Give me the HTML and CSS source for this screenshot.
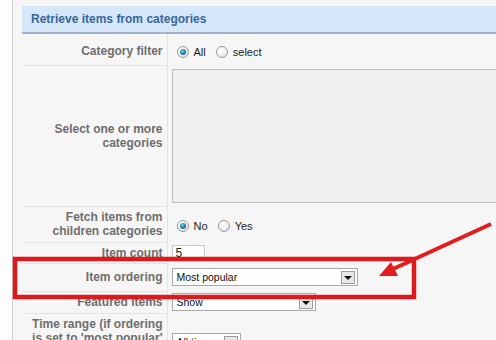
FILE: index.html
```html
<!DOCTYPE html>
<html lang="en">
  <head>
    <meta charset="UTF-8" />
    <title>Module parameters</title>
    <link rel="stylesheet" href="styles.css">
  </head>

  <body>
    <div class="page">
      <div class="gutter"></div>
      <div class="panel">
        <h3 class="panel-title">Retrieve items from categories</h3>

        <table class="paramlist">
          <tr class="row-filter">
            <td class="key">Category filter</td>
            <td class="value">
              <span class="radio checked"></span><span class="opt">All</span>
              <span class="radio"></span><span class="opt">select</span>
            </td>
          </tr>
          <tr class="row-cats">
            <td class="key">Select one or more categories</td>
            <td class="value"><div class="multi"></div></td>
          </tr>
          <tr class="row-children">
            <td class="key">Fetch items from children categories</td>
            <td class="value">
              <span class="radio checked"></span><span class="opt">No</span>
              <span class="radio"></span><span class="opt">Yes</span>
            </td>
          </tr>
          <tr class="row-count">
            <td class="key">Item count</td>
            <td class="value"><span class="textbox">5</span></td>
          </tr>
          <tr class="row-ordering">
            <td class="key">Item ordering</td>
            <td class="value">
              <span class="select wide">Most popular<span class="drop"></span></span>
            </td>
          </tr>
          <tr class="row-featured">
            <td class="key">Featured items</td>
            <td class="value">
              <span class="select mid">Show<span class="drop"></span></span>
            </td>
          </tr>
          <tr class="row-time">
            <td class="key">Time range (if ordering is set to 'most popular' or 'most commented')</td>
            <td class="value">
              <span class="select small">All time<span class="drop"></span></span>
            </td>
          </tr>
        </table>
      </div>
    </div>

    <!-- annotation drawn on top of the screenshot -->
    <svg class="marks" width="496" height="340" viewBox="0 0 496 340">
      <rect x="15" y="259" width="399" height="38" fill="none" stroke="#dc1a1d" stroke-width="4.5" />
      <line x1="491" y1="224" x2="393" y2="269" stroke="#e31d1f" stroke-width="4" />
      <polygon points="379,276 391,262 398,276" fill="#e31d1f" />
    </svg>
  </body>
</html>
```

FILE: styles.css
```css
* {
  margin: 0;
  box-sizing: border-box;
}

body {
  background-color: #ffffff;
  width: 496px;
  height: 340px;
  overflow: hidden;
  position: relative;
  font-family: "Liberation Sans", Arial, sans-serif;
}

.page {
  display: flex;
  height: 340px;
}

.gutter {
  width: 13px;
  flex: none;
  border-right: 1px solid #cfcfcf;
  background-color: #fdfdfd;
}

.panel {
  flex: none;
  width: 540px;
  padding: 6px 0 0 9px;
  background-color: #f6f6f6;
}

.panel-title {
  height: 28px;
  padding: 0 9px;
  font-size: 12px;
  line-height: 26px;
  color: #36679c;
  background-color: #d6e7f9;
  border-bottom: 2px solid #9fb3cb;
}

.paramlist {
  width: 100%;
  border-collapse: collapse;
}

.paramlist td {
  padding: 0;
  vertical-align: middle;
}

.key {
  width: 145px;
  padding-right: 4px !important;
  text-align: right;
  font-size: 12px;
  font-weight: bold;
  line-height: 14px;
  color: #6e6e6e;
  border-right: 1px solid #e4e4e4;
  border-bottom: 1px solid #e4e4e4;
}

.value {
  padding-left: 4px !important;
  font-size: 11px;
  color: #1d1d1d;
}

.row-filter td {
  height: 31px;
  padding-top: 4px !important;
}

.row-cats td { height: 141px; }
.row-children td { height: 36px; }
.row-count td { height: 21px; }
.row-ordering td { height: 28px; }
.row-featured td { height: 22px; }

.row-time td {
  vertical-align: top;
  height: 60px;
}

.row-time .key {
  padding-top: 3px !important;
}

.row-time .value {
  padding-top: 20px !important;
}

.row-cats .value {
  vertical-align: top;
  padding-top: 4px !important;
}

.row-children .value {
  padding-top: 4px !important;
}

.multi {
  width: 340px;
  height: 134px;
  background-color: #efefef;
  border: 1px solid #bdbdbd;
}

.radio {
  display: inline-block;
  width: 12px;
  height: 12px;
  margin: 0 5px 0 5px;
  vertical-align: -2px;
  border: 1px solid #9a9a9a;
  border-radius: 50%;
  background: radial-gradient(circle at 35% 35%, #ffffff 0, #f2f2f2 45%, #d4d4d4 100%);
  position: relative;
}

.radio.checked::after {
  content: "";
  position: absolute;
  left: 2px;
  top: 2px;
  width: 6px;
  height: 6px;
  border-radius: 50%;
  background: radial-gradient(circle at 40% 35%, #7fd0ea 0, #2a86b0 45%, #10455f 100%);
}

.opt {
  margin-right: 2px;
}

.textbox {
  display: inline-block;
  width: 33px;
  height: 16px;
  padding-left: 3px;
  line-height: 15px;
  font-size: 12px;
  background-color: #ffffff;
  border: 1px solid #c7c7c7;
}

.select {
  display: inline-flex;
  align-items: center;
  justify-content: space-between;
  height: 18px;
  padding: 0 2px 0 4px;
  font-size: 10.5px;
  color: #111111;
  background-color: #ffffff;
  border: 1px solid #a9a9a9;
}

.select.wide { width: 186px; }
.select.mid { width: 144px; }
.select.small { width: 69px; }

.drop {
  width: 14px;
  height: 13px;
  display: flex;
  align-items: center;
  justify-content: center;
  background-color: #e9e9e9;
  border: 1px solid #9c9c9c;
}

.drop::before {
  content: "";
  border-left: 4px solid transparent;
  border-right: 4px solid transparent;
  border-top: 4px solid #111111;
  margin-top: 2px;
}

.marks {
  position: absolute;
  left: 0;
  top: 0;
  pointer-events: none;
}
```
